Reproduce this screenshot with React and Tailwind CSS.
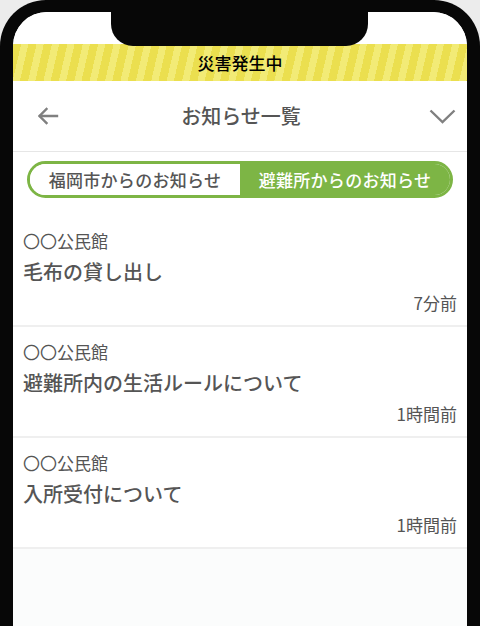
import React from "react";

const notices = [
  { place: "〇〇公民館", title: "毛布の貸し出し", time: "7分前" },
  { place: "〇〇公民館", title: "避難所内の生活ルールについて", time: "1時間前" },
  { place: "〇〇公民館", title: "入所受付について", time: "1時間前" },
];

function BackArrow() {
  return (
    <svg width="22" height="18" viewBox="0 0 22 18" fill="none" stroke="#808080" strokeWidth="2.4" strokeLinecap="square">
      <path d="M20 9H3" />
      <path d="M9.5 2L2.5 9l7 7" />
    </svg>
  );
}

function ChevronDown() {
  return (
    <svg width="27" height="15" viewBox="0 0 27 15" fill="none" stroke="#808080" strokeWidth="2.4">
      <path d="M1.5 1.5l12 11.5 12-11.5" />
    </svg>
  );
}

export default function App() {
  return (
    <div className="w-[480px] h-[626px] overflow-hidden bg-[#ececec] font-['Noto_Sans_CJK_JP','Noto_Sans',sans-serif]">
      {/* 端末の枠 */}
      <div className="h-[680px] rounded-t-[46px] bg-[#070707] px-[13px] pt-[12px]">
        <div className="relative h-full rounded-t-[34px] bg-[#fbfcfc] overflow-hidden flex flex-col">
          {/* ノッチ */}
          <div className="absolute left-[98px] top-0 w-[257px] h-[34px] bg-[#070707] rounded-b-[22px] z-10" />

          <div className="h-[32px] bg-white shrink-0" />

          {/* 災害発生中バナー */}
          <div className="h-[37px] shrink-0 flex items-center justify-center bg-[repeating-linear-gradient(103deg,#ebdf4f_0px,#ebdf4f_8px,#f2eb76_8px,#f2eb76_15px)]">
            <span className="text-[17px] leading-none font-medium text-black">災害発生中</span>
          </div>

          {/* ヘッダー */}
          <div className="h-[71px] shrink-0 bg-white border-b border-[#e6e6e6] flex items-center justify-between pl-[24px] pr-[11px]">
            <BackArrow />
            <h1 className="text-[20px] font-medium text-[#555555] pr-[6px]">お知らせ一覧</h1>
            <ChevronDown />
          </div>

          {/* タブ */}
          <div className="bg-white shrink-0 px-[14px] pt-[9px] pb-[18px]">
            <div className="flex h-[37px] rounded-full border-[3px] border-[#7db545] overflow-hidden">
              <button className="flex-1 bg-white text-[17px] font-medium text-[#555555] tracking-[0.3px]">
                福岡市からのお知らせ
              </button>
              <button className="flex-1 bg-[#7db545] text-[17px] font-medium text-white tracking-[0.3px]">
                避難所からのお知らせ
              </button>
            </div>
          </div>

          {/* お知らせ一覧 */}
          <ul>
            {notices.map((n, i) => (
              <li key={i} className="bg-white border-b-2 border-[#efefef] px-[10px] pt-[13px] pb-[10px]">
                <p className="text-[17px] leading-[24px] text-[#555555]">{n.place}</p>
                <p className="mt-[5px] text-[20px] leading-[28px] font-medium text-[#555555]">{n.title}</p>
                <p className="mt-[5px] text-[17px] leading-[24px] text-[#555555] text-right">{n.time}</p>
              </li>
            ))}
          </ul>
        </div>
      </div>
    </div>
  );
}
